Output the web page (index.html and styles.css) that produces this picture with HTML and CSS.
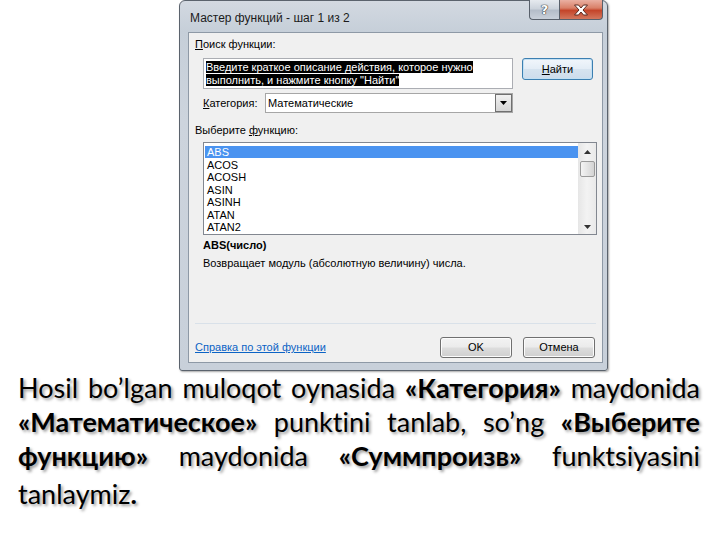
FILE: index.html
```html
<!DOCTYPE html>
<html lang="ru">
<head>
<meta charset="utf-8">
<title>Мастер функций</title>
<link rel="stylesheet" href="styles.css">
</head>
<body>
<div class="page">
  <div class="window">
    <div class="titlebar">
      <span class="title">Мастер функций - шаг 1 из 2</span>
      <div class="caption">
        <div class="cbtn help">?</div>
        <div class="cbtn close">
          <svg width="16" height="12" viewBox="0 0 16 12"><path d="M1.5 1h4l2.5 3 2.5-3h4l-4.5 5 4.5 5h-4l-2.5-3-2.5 3h-4l4.5-5z" fill="#fff" stroke="#5a2a20" stroke-width="1" stroke-linejoin="round"/></svg>
        </div>
      </div>
    </div>
    <div class="panel">
      <div class="label first"><u>П</u>оиск функции:</div>
      <div class="search-row">
        <div class="textbox"><span class="hl">Введите краткое описание действия, которое нужно</span><br><span class="hl">выполнить, и нажмите кнопку "Найти"</span></div>
        <div class="btn default"><span><u>Н</u>айти</span></div>
      </div>
      <div class="cat-row">
        <span class="cat-label"><u>К</u>атегория:</span>
        <div class="combo">
          <span class="combo-text">Математические</span>
          <div class="dd"><svg width="7" height="4" viewBox="0 0 7 4"><path d="M0 0h7L3.5 4z" fill="#000"/></svg></div>
        </div>
      </div>
      <div class="label choose">Выберите <u>ф</u>ункцию:</div>
      <div class="listbox">
        <div class="items">
          <div class="item sel">ABS</div>
          <div class="item">ACOS</div>
          <div class="item">ACOSH</div>
          <div class="item">ASIN</div>
          <div class="item">ASINH</div>
          <div class="item">ATAN</div>
          <div class="item">ATAN2</div>
        </div>
        <div class="scrollbar">
          <div class="arrow"><svg width="7" height="4" viewBox="0 0 7 4"><path d="M3.5 0L7 4H0z" fill="#333"/></svg></div>
          <div class="thumb"></div>
          <div class="track"></div>
          <div class="arrow"><svg width="7" height="4" viewBox="0 0 7 4"><path d="M0 0h7L3.5 4z" fill="#333"/></svg></div>
        </div>
      </div>
      <div class="sig">ABS(число)</div>
      <div class="desc">Возвращает модуль (абсолютную величину) числа.</div>
      <div class="sep"></div>
      <div class="bottom-row">
        <a class="link">Справка по этой функции</a>
        <div class="btn ok"><span>OK</span></div>
        <div class="btn cancel"><span>Отмена</span></div>
      </div>
    </div>
  </div>
  <div class="text">
    <div class="line">Hosil bo’lgan muloqot oynasida <b>«Категория»</b> maydonida</div>
    <div class="line"><b>«Математическое»</b> punktini tanlab, so’ng <b>«Выберите</b></div>
    <div class="line"><b>функцию»</b> maydonida <b>«Суммпроизв»</b> funktsiyasini</div>
    <div class="line last">tanlaymiz<b>.</b></div>
  </div>
</div>
</body>
</html>
```
FILE: styles.css
```css
html, body {
  margin: 0;
  padding: 0;
  background: #fff;
}

.page {
  width: 720px;
  height: 540px;
  overflow: hidden;
  display: flex;
  flex-direction: column;
}

.window {
  margin-left: 179px;
  width: 429px;
  height: 371px;
  box-sizing: border-box;
  border: 1px solid #5b636d;
  border-radius: 6px 6px 3px 3px;
  background: linear-gradient(to bottom, #d3d9e1 0, #c6cfd9 30px, #cdd4dd 120px, #c8d0da 100%);
  box-shadow: 1px 1px 2px rgba(0, 0, 0, 0.35);
  display: flex;
  flex-direction: column;
}

.titlebar {
  height: 31px;
  flex: none;
  display: flex;
  align-items: flex-start;
}

.title {
  font-family: "Liberation Sans", Arial, sans-serif;
  font-size: 12px;
  line-height: 14px;
  color: #1b1b1b;
  margin: 10px 0 0 10px;
}

.caption {
  margin-left: auto;
  margin-right: 4px;
  margin-top: -1px;
  display: flex;
}

.cbtn {
  height: 20px;
  box-sizing: border-box;
  border: 1px solid #58606b;
  border-top: none;
  display: flex;
  align-items: center;
  justify-content: center;
}

.help {
  width: 30px;
  border-right: none;
  border-radius: 0 0 0 4px;
  background: linear-gradient(to bottom, #e6eaef 0, #ccd3dc 45%, #b4bdc9 55%, #c9d0da 100%);
  font-family: "DejaVu Sans", sans-serif;
  font-weight: bold;
  font-size: 13px;
  color: #fff;
  text-shadow: 0 0 1px #333, 0 0 1px #333, 0 0 1px #333;
}

.close {
  width: 44px;
  border-radius: 0 0 4px 0;
  background: linear-gradient(to bottom, #eab0a2 0, #d98068 42%, #c4452a 55%, #d3775d 100%);
}

.panel {
  flex: 1;
  margin: 0 4px 7px 8px;
  background: #f0f0f0;
  border: 1px solid #8e99a6;
  padding: 0 5px 0 6px;
  display: flex;
  flex-direction: column;
  font-family: "Liberation Sans", Arial, sans-serif;
  font-size: 11px;
  line-height: 13px;
  color: #000;
}

.label.first {
  margin-top: 5px;
}

.search-row {
  display: flex;
  align-items: flex-start;
  margin: 7px 0 0 8px;
}

.textbox {
  width: 310px;
  height: 31px;
  box-sizing: border-box;
  background: #fff;
  border: 1px solid #abadb3;
  padding: 2px 0 0 2px;
  line-height: 13px;
  color: #fff;
}

.hl {
  background: #000;
}

.btn {
  box-sizing: border-box;
  height: 22px;
  width: 72px;
  border: 1px solid #707070;
  border-radius: 3px;
  background: linear-gradient(to bottom, #f3f3f3 0, #ebebeb 48%, #dddddd 52%, #cfcfcf 100%);
  display: flex;
  align-items: center;
  justify-content: center;
  box-shadow: inset 0 0 0 1px #fcfcfc;
}

.btn.default {
  width: 71px;
  margin-left: 9px;
  border-color: #3c7fb1;
  background: linear-gradient(to bottom, #f1f6fb 0, #e4edf6 48%, #d6e3ef 52%, #cddcec 100%);
  box-shadow: inset 0 0 0 1px #c3e0f3;
}

.cat-row {
  display: flex;
  align-items: center;
  margin: 4px 0 0 8px;
  height: 20px;
}

.cat-label {
  width: 62px;
}

.combo {
  width: 248px;
  height: 20px;
  box-sizing: border-box;
  background: #fff;
  border: 1px solid #a6a6a6;
  display: flex;
  align-items: center;
}

.combo-text {
  flex: 1;
  padding-left: 2px;
}

.dd {
  width: 17px;
  height: 18px;
  box-sizing: border-box;
  border: 1px solid #707070;
  background: linear-gradient(to bottom, #f2f2f2 0, #e3e3e3 50%, #d6d6d6 100%);
  display: flex;
  align-items: center;
  justify-content: center;
  margin-right: 0;
}

.label.choose {
  margin-top: 11px;
}

.listbox {
  margin: 5px 0 0 8px;
  width: 394px;
  height: 93px;
  box-sizing: border-box;
  border: 1px solid #828790;
  background: #fff;
  display: flex;
}

.items {
  flex: 1;
  padding: 3px 0 0 1px;
}

.item {
  height: 12.5px;
  line-height: 12.5px;
  padding-left: 2px;
}

.item.sel {
  background: #4a93f0;
  color: #fff;
  height: 12px;
  margin-bottom: 0.5px;
}

.scrollbar {
  width: 18px;
  background: linear-gradient(to right, #e6e6e6, #f3f3f3 50%, #e9e9e9);
  display: flex;
  flex-direction: column;
  align-items: center;
}

.arrow {
  height: 15px;
  width: 100%;
  display: flex;
  align-items: center;
  justify-content: center;
}

.arrow:first-child {
  margin-top: 1px;
}

.thumb {
  width: 15px;
  height: 16px;
  box-sizing: border-box;
  border: 1px solid #9a9a9a;
  border-radius: 2px;
  background: linear-gradient(to right, #f4f4f4, #e4e4e4 50%, #d3d3d3);
  margin-top: 2px;
}

.track {
  flex: 1;
}

.sig {
  margin: 4px 0 0 8px;
  font-weight: bold;
}

.desc {
  margin: 5px 0 0 8px;
}

.sep {
  margin-top: auto;
  height: 1px;
  margin-right: 1px;
  background: #d9e1e9;
}

.bottom-row {
  display: flex;
  align-items: center;
  margin-top: 13px;
  margin-bottom: 4px;
  height: 21px;
}

.link {
  color: #0b63c5;
  text-decoration: underline;
  margin-right: auto;
}

.btn.ok {
  height: 21px;
}

.btn.cancel {
  height: 21px;
  margin-left: 11px;
  margin-right: 2px;
}

.text {
  margin: 0 20px 0 18px;
  font-family: "Lato", "Open Sans", sans-serif;
  font-size: 27px;
  line-height: 34px;
  color: #000;
  font-variant-ligatures: none;
  text-shadow: 2px 2px 3px rgba(0, 0, 0, 0.4);
}

.line {
  white-space: nowrap;
  text-align: justify;
  text-align-last: justify;
}

.line.last {
  text-align-last: left;
  margin-top: 4px;
}

.line b {
  font-weight: bold;
}
```
